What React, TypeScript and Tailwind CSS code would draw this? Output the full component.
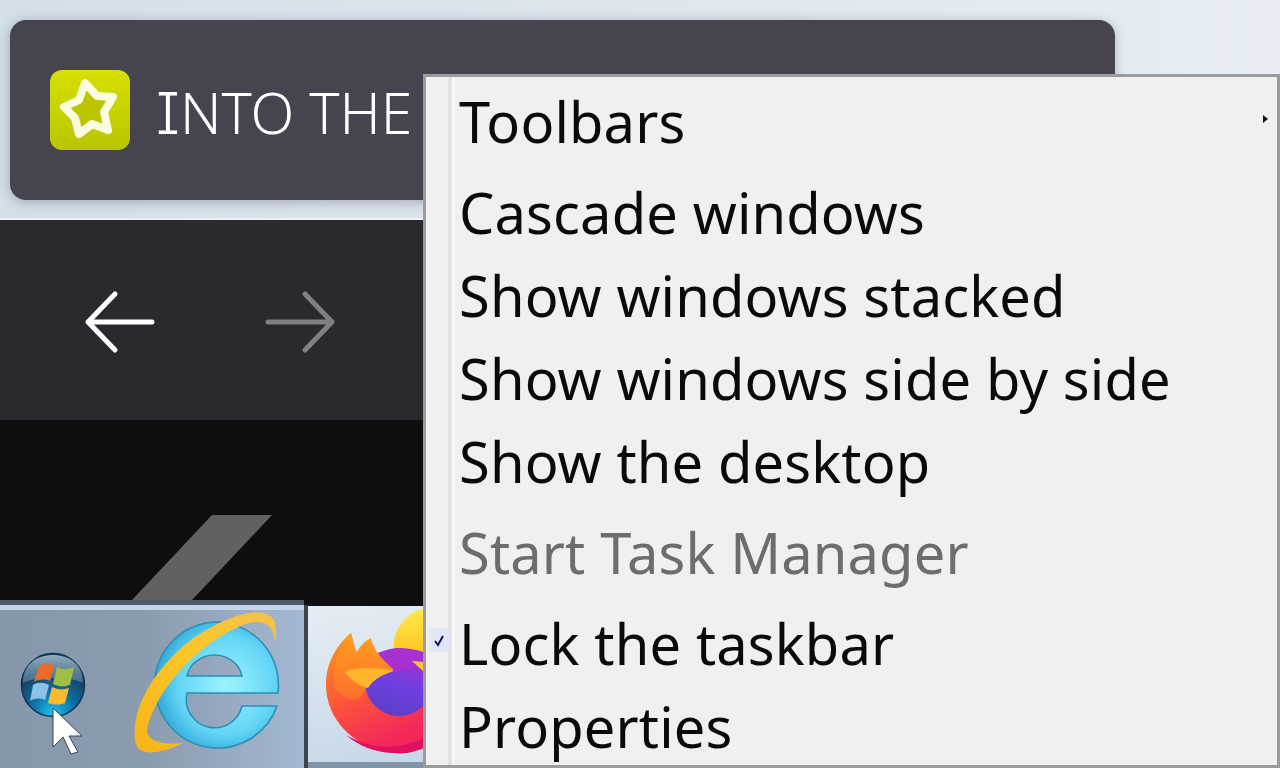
import React from "react";

const rows = ["Cascade windows", "Show windows stacked", "Show windows side by side", "Show the desktop"];

const MenuRow = ({ label, muted, checked, arrow }: { label: string; muted?: boolean; checked?: boolean; arrow?: boolean }) => (
  <div className={`relative flex h-[83px] items-center pl-[33px] pb-[4px] text-[56px] leading-none tracking-[0.15px] ${muted ? "text-[#6d6d6d]" : "text-[#0a0a0a]"}`}>
    {checked && (
      <span className="absolute left-[3px] top-[25px] flex h-[24px] w-[20px] items-center justify-center rounded-[3px] bg-[#dfe6f7]">
        <svg width="12" height="13" viewBox="0 0 12 13" fill="none">
          <path d="M2 7 L5 11 L10 2" stroke="#12125e" strokeWidth="2" />
        </svg>
      </span>
    )}
    <span>{label}</span>
    {arrow && <span className="absolute right-[9px] top-[34px] h-0 w-0 border-y-[4px] border-l-[5px] border-y-transparent border-l-[#111111]" />}
  </div>
);

const ArrowIcon = ({ color, flip }: { color: string; flip?: boolean }) => (
  <svg width="72" height="64" viewBox="0 0 72 64" fill="none" className={flip ? "-scale-x-100" : ""}>
    <path d="M4 32 H68 M31 4 L4 32 L31 60" stroke={color} strokeWidth="5" strokeLinecap="round" strokeLinejoin="round" />
  </svg>
);

const StarTile = () => (
  <div className="h-[80px] w-[80px] shrink-0 rounded-[12px] bg-gradient-to-b from-[#d6e000] to-[#b8c600]">
    <svg width="80" height="80" viewBox="50 70 80 80">
      <path
        d="M85 83 L97 96 L113 97 L104 112 L108 130 L92 124 L79 134 L75 118 L64 107 L79 100 Z"
        fill="#b9c600"
        stroke="#fbfde0"
        strokeWidth="8"
        strokeLinejoin="round"
      />
    </svg>
  </div>
);

const WindowsOrb = () => (
  <svg width="66" height="66" viewBox="0 0 66 66">
    <defs>
      <radialGradient id="orb" cx="50%" cy="95%" r="70%">
        <stop offset="0%" stopColor="#1cc4f0" />
        <stop offset="50%" stopColor="#0f6fa6" />
        <stop offset="100%" stopColor="#123f5e" />
      </radialGradient>
      <linearGradient id="orbShine" x1="0" y1="0" x2="0" y2="1">
        <stop offset="0%" stopColor="#a9c0cf" stopOpacity="0.85" />
        <stop offset="100%" stopColor="#6d8ea5" stopOpacity="0.55" />
      </linearGradient>
    </defs>
    <circle cx="33" cy="33" r="31.5" fill="url(#orb)" stroke="#0d3550" strokeWidth="1.5" />
    <path d="M3 31 C3 12 17 3 33 3 C49 3 63 12 63 31 C50 24 16 24 3 31 Z" fill="url(#orbShine)" />
    <path d="M19 15 C23 11 28 11 34 14 L30 29 C25 27 20 27 14 30 Z" fill="#ec6a2a" />
    <path d="M37 15 C42 18 47 18 54 15 L50 33 C44 35 39 35 33 32 Z" fill="#a2bd45" />
    <path d="M13 33 C18 30 23 30 29 33 L25 48 C20 46 15 46 10 49 Z" fill="#8cc2e8" />
    <path d="M32 35 C38 38 43 38 49 36 L45 51 C39 53 34 53 28 51 Z" fill="#fbb92f" />
  </svg>
);

const IeLogo = () => (
  <svg width="160" height="156" viewBox="130 606 160 156">
    <defs>
      <radialGradient id="ieBlue" cx="58%" cy="50%" r="60%">
        <stop offset="0%" stopColor="#9ff3ff" />
        <stop offset="65%" stopColor="#63d5f6" />
        <stop offset="100%" stopColor="#2ba3d4" />
      </radialGradient>
      <linearGradient id="ieRing" x1="0" y1="1" x2="1" y2="0">
        <stop offset="0%" stopColor="#f6b417" />
        <stop offset="55%" stopColor="#fcc72a" />
        <stop offset="100%" stopColor="#f3c24a" />
      </linearGradient>
    </defs>
    <path
      fillRule="evenodd"
      d="M215 622 A63 63 0 0 1 278 693 L187 693 A28 28 0 0 0 242 706 L277 706 A63 63 0 1 1 215 622 Z M187 676 L242 676 A28 26 0 0 0 187 676 Z"
      fill="url(#ieBlue)"
      stroke="#2a8eb6"
      strokeWidth="1.5"
    />
    <path
      d="M135 725 C138 700 155 670 187 643 C215 622 245 610 262 613 C275 614 278 625 275 643 C274 630 270 622 255 622 C240 622 205 645 187 663 C165 685 150 712 147 730 C147 742 165 745 183 743 C165 752 148 755 140 750 C134 745 134 735 135 725 Z"
      fill="url(#ieRing)"
    />
  </svg>
);

const FirefoxLogo = () => (
  <svg width="116" height="156" viewBox="307 606 116 156" className="shrink-0">
    <defs>
      <linearGradient id="foxBody" x1="0" y1="0" x2="0.4" y2="1">
        <stop offset="0%" stopColor="#ff9a1f" />
        <stop offset="50%" stopColor="#ff5a35" />
        <stop offset="100%" stopColor="#f2285a" />
      </linearGradient>
      <linearGradient id="foxHead" x1="0" y1="0" x2="0" y2="1">
        <stop offset="0%" stopColor="#ffa01e" />
        <stop offset="100%" stopColor="#ff6f2e" />
      </linearGradient>
      <linearGradient id="foxGlobe" x1="0.3" y1="1" x2="0.6" y2="0">
        <stop offset="0%" stopColor="#5a3fc6" />
        <stop offset="45%" stopColor="#6d3fe0" />
        <stop offset="100%" stopColor="#a92fd0" />
      </linearGradient>
      <linearGradient id="foxTop" x1="0" y1="0" x2="0" y2="1">
        <stop offset="0%" stopColor="#ffe84a" />
        <stop offset="100%" stopColor="#ffc21f" />
      </linearGradient>
    </defs>
    <path d="M393 650 C391 632 402 618 416 610 L423 610 L423 660 Z" fill="url(#foxTop)" />
    <path
      d="M325 685 C325 662 336 645 350 633 L360 670 L423 690 L423 748 C412 752 404 754 396 753 C354 750 325 720 325 685 Z"
      fill="url(#foxBody)"
    />
    <path d="M345 735 C375 752 400 748 423 738 L423 748 C410 753 400 754 392 753 C372 752 358 746 345 735 Z" fill="#e0115f" />
    <circle cx="398" cy="682" r="34" fill="url(#foxGlobe)" />
    <path d="M372 656 C385 647 405 646 423 652 L423 664 L395 672 Z" fill="#a92fd0" />
    <path d="M350 633 C351 640 353 647 356 652 C359 646 364 641 370 638 C372 650 382 660 393 670 C380 675 368 680 364 690 C358 705 345 700 335 690 C328 670 338 645 350 633 Z" fill="url(#foxHead)" />
    <path d="M344 672 C356 666 378 668 393 671 C380 675 372 680 367 688 C358 686 350 680 344 672 Z" fill="#ffb52e" />
    <path d="M411 661 L423 662 L423 672 Z" fill="#ffc62e" />
  </svg>
);

const MouseCursor = () => (
  <svg width="34" height="50" viewBox="0 0 34 50" className="absolute left-[51px] top-[706px]">
    <path d="M2 2 L2 41 L12 31 L20 48 L27 46 L18 30 L31 30 Z" fill="#ffffff" stroke="#3a4350" strokeWidth="1" />
  </svg>
);

export default function App() {
  return (
    <div className="relative h-[768px] w-[1280px] overflow-hidden bg-[#0e0e10] font-['Noto_Sans',sans-serif]">
      {/* page header with the dark title card */}
      <div className="h-[220px] border-b-[2px] border-[#eef2f5] bg-gradient-to-r from-[#d3dfe7] to-[#e8eef3] px-[10px] pt-[20px]">
        <div className="flex h-[180px] w-[1105px] items-center rounded-[16px] bg-[#45444f] pl-[40px] shadow-[0_2px_12px_rgba(60,60,90,0.35)]">
          <StarTile />
          <span className="ml-[26px] mt-[6px] text-[57px] font-light leading-none text-white">
            <span className="font-['Inter',sans-serif] [font-feature-settings:'ss02']">I</span>NTO THE
          </span>
        </div>
      </div>

      {/* back / forward */}
      <div className="flex h-[200px] items-center gap-[108px] bg-[#2a2a2e] pl-[84px] pt-[4px]">
        <ArrowIcon color="#ffffff" />
        <ArrowIcon color="#808083" flip />
      </div>

      {/* dark panel */}
      <div className="h-[180px] overflow-hidden bg-[#0e0e10] pl-[132px] pt-[95px]">
        <svg width="140" height="90" viewBox="0 0 140 90">
          <path d="M80 0 L140 0 L60 85 L0 85 Z" fill="#616161" />
        </svg>
      </div>

      {/* taskbar */}
      <div className="flex h-[168px]">
        <div className="flex w-[304px] flex-col">
          <div className="h-[5px] bg-[#4e5b6a]" />
          <div className="h-[5px] bg-[#c5d4e8]" />
          <div className="flex flex-1 items-start bg-gradient-to-r from-[#8797ab] via-[#8c9cb0] to-[#a4b8d2] pl-[20px] pt-[42px]">
            <WindowsOrb />
            <div className="ml-[44px] mt-[-46px]">
              <IeLogo />
            </div>
          </div>
        </div>
        <div className="mt-[5px] w-[4px] bg-[#3b4550]" />
        <div className="flex flex-1 flex-col">
          <div className="h-[6px] bg-[#0e0e10]" />
          <div className="h-[156px] bg-gradient-to-br from-[#e6edf3] to-[#aec7df]">
            <FirefoxLogo />
          </div>
          <div className="flex-1 bg-[#8292a8]" />
        </div>
      </div>

      <MouseCursor />

      {/* taskbar context menu */}
      <div className="absolute bottom-0 left-[423px] right-0 top-[74px] border-[3px] border-[#9a9c9e] bg-[#f0f0f0]">
        <div className="absolute bottom-0 left-[22px] top-0 w-[4px] bg-[#e2e2e2]" />
        <div className="absolute bottom-0 left-[26px] top-0 w-[3px] bg-[#f8f8f8]" />
        <div className="relative flex flex-col gap-[8px] pt-[4px]">
          <MenuRow label="Toolbars" arrow />
          <div className="flex flex-col">
            {rows.map((label) => (
              <MenuRow key={label} label={label} />
            ))}
          </div>
          <MenuRow label="Start Task Manager" muted />
          <div className="flex flex-col">
            <MenuRow label="Lock the taskbar" checked />
            <MenuRow label="Properties" />
          </div>
        </div>
      </div>
    </div>
  );
}
